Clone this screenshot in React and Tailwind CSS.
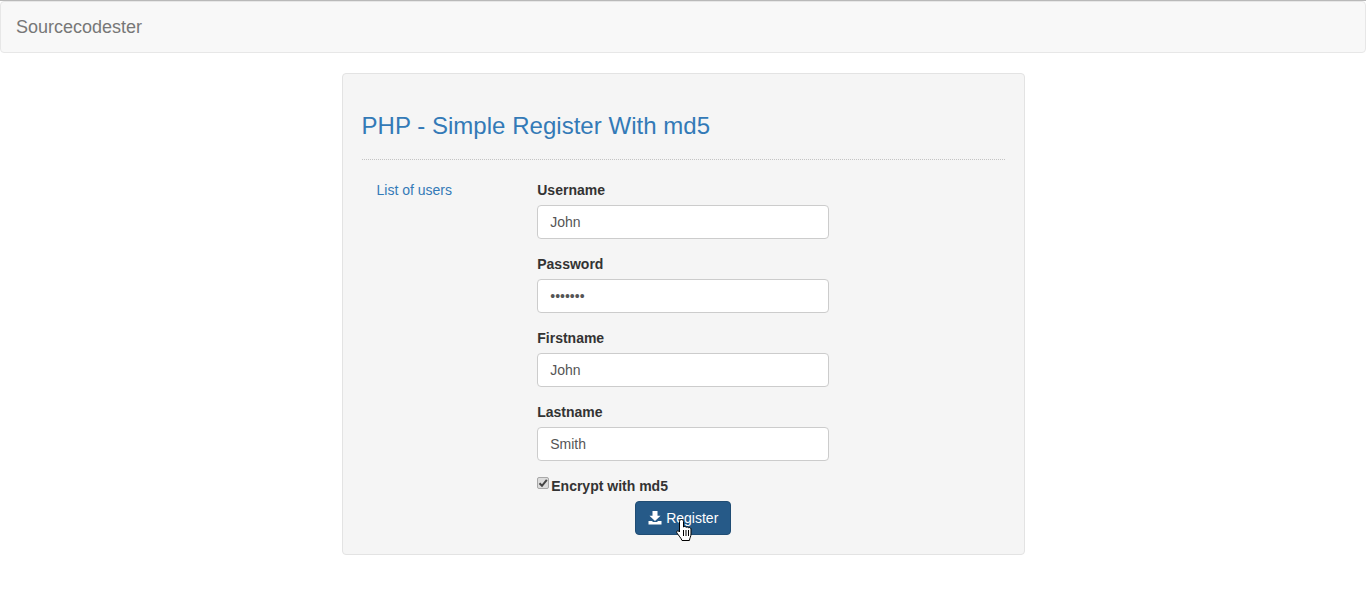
import React from "react";

function Field({ label, value, type = "text" }) {
  return (
    <div className="mb-[15px]">
      <label className="block mb-[5px] text-[14px] leading-5 font-bold text-[#333]">{label}</label>
      <input
        readOnly
        type={type}
        value={value}
        className="block w-full h-[34px] px-3 py-1.5 text-[14px] leading-5 text-[#555] bg-white border border-[#ccc] rounded outline-none"
      />
    </div>
  );
}

export default function App() {
  return (
    <div className="min-h-[590px] bg-white font-['Liberation_Sans',Arial,sans-serif] text-[14px] leading-5 text-[#333]">
      <div className="h-px bg-[#b9b9b9]" />
      <nav className="h-[52px] mb-5 flex items-center px-[15px] bg-[#f8f8f8] border border-[#e7e7e7] rounded">
        <span className="text-[18px] leading-5 text-[#777]">Sourcecodester</span>
      </nav>
      <main className="w-[683px] mx-auto p-[19px] bg-[#f5f5f5] border border-[#e3e3e3] rounded">
        <h3 className="mt-5 mb-2.5 text-[24px] leading-[26.4px] tracking-[0.03px] text-[#337ab7]">PHP - Simple Register With md5</h3>
        <hr className="mt-5 mb-5 border-0 border-t border-dotted border-[#c4c4c4]" />
        <div className="flex">
          <div className="w-[160.75px] pl-[15px]">
            <a className="text-[#337ab7]">List of users</a>
          </div>
          <form className="w-[292px] ml-[15px]">
            <Field label="Username" value="John" />
            <Field label="Password" value="1234567" type="password" />
            <Field label="Firstname" value="John" />
            <Field label="Lastname" value="Smith" />
            <div className="flex items-start h-5 mt-1 mb-[5px]">
              <span className="relative w-3 h-3 mt-[1px] mr-[2px] flex items-center justify-center bg-[#dcdcdc] border border-[#a8a8a8] rounded-[2px]">
                <input readOnly type="checkbox" checked className="absolute inset-0 opacity-0" />
                <svg width="10" height="10" viewBox="0 0 10 10">
                  <path d="M1.500 5.200 L4 7.800 L8.800 1.800" fill="none" stroke="#444" strokeWidth="2" />
                </svg>
              </span>
              <span className="font-bold">Encrypt with md5</span>
            </div>
            <div className="flex justify-center">
              <button type="button" className="relative h-[34px] w-[96px] flex items-center justify-center gap-1 bg-[#265a88] border border-[#204d74] rounded text-white">
                <svg width="14" height="14" viewBox="0 0 14 14">
                  <path fill="#fff" d="M4.500 0h5v4.800h3L7 10 1.500 4.800h3z" />
                  <path fill="#fff" d="M0.500 10h3.500l1 1h4l1-1h3.500v3.500H0.500z" />
                </svg>
                <span>Register</span>
                <svg width="17" height="22" viewBox="0 0 17 22" className="absolute left-[40px] top-[17px]">
                  <path
                    fill="#fff"
                    stroke="#000"
                    strokeWidth="1"
                    strokeLinejoin="round"
                    d="M5.500 0.500c1 0 2 .8 2 2V8c.5-.8 2.200-.8 2.600.4.500-.8 2.100-.6 2.400.5.600-.7 2.500-.5 2.500 1.100V15c0 2.500-1.300 4-1.600 6.500H6C5.500 19.500 1 14.500 .7 13.500c-.4-1.300 1-2.400 2.300-1.200l.5.700V2.500c0-1.200 1-2 2-2z"
                  />
                  <path stroke="#000" strokeWidth="1" d="M7.500 11v6M10 11v6M12.500 11v6" />
                </svg>
              </button>
            </div>
          </form>
        </div>
      </main>
    </div>
  );
}
